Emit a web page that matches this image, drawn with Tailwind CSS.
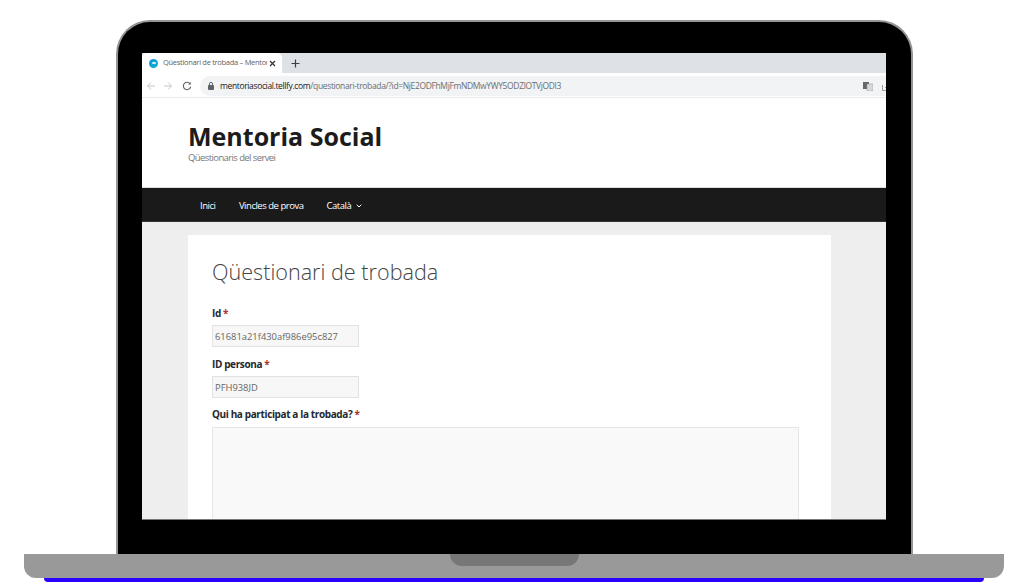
<!DOCTYPE html>
<html lang="ca">
<head>
    <meta charset="UTF-8">
    <title>Qüestionari de trobada</title>
    <script src="https://cdn.jsdelivr.net/npm/@tailwindcss/browser@4"></script>
</head>
<body class="bg-white w-[1024px] h-[588px] overflow-hidden pt-[20px] font-['Open_Sans',sans-serif]">

    <!-- laptop lid -->
    <div class="ml-[116px] w-[797px] h-[534px] bg-black border-2 border-b-0 border-[#949494] rounded-t-[34px] pt-[31px] pl-[24px]">
        <div class="w-[744px] h-[467px] bg-white overflow-hidden flex flex-col border-b border-[#777]">

            <!-- browser tabs -->
            <div class="h-[20px] shrink-0 bg-[#dee1e6] flex items-center">
                <div class="w-[140px] h-[20px] bg-white rounded-t-[5px] flex items-center pl-[7px] pr-[6px]">
                    <span class="w-[9px] h-[9px] rounded-full bg-gradient-to-br from-[#1595e8] to-[#10b5c0] flex items-center justify-center shrink-0">
                        <span class="w-[4px] h-[2px] bg-white/80 rounded-full"></span>
                    </span>
                    <span class="ml-[5px] w-[104px] text-[7.5px] tracking-[-0.3px] text-[#5f6368] whitespace-nowrap overflow-hidden">Qüestionari de trobada – Mentor</span>
                    <svg class="ml-auto shrink-0" width="7" height="7" viewBox="0 0 7 7"><path d="M1 1l5 5M6 1L1 6" stroke="#333" stroke-width="1.2"/></svg>
                </div>
                <svg class="ml-[9px]" width="9" height="9" viewBox="0 0 9 9"><path d="M4.5 .5v8M.5 4.5h8" stroke="#3c4043" stroke-width="1.2"/></svg>
            </div>

            <!-- browser toolbar -->
            <div class="h-[25px] shrink-0 bg-white border-b border-[#e8eaed] flex items-center pl-[4px] pt-[2px]">
                <svg width="10" height="10" viewBox="0 0 10 10" fill="none" stroke="#c4c7cb" stroke-width="1"><path d="M9 5H1.5M5 1.5L1.5 5 5 8.5"/></svg>
                <svg class="ml-[7px]" width="10" height="10" viewBox="0 0 10 10" fill="none" stroke="#c4c7cb" stroke-width="1"><path d="M1 5h7.5M5 1.5L8.5 5 5 8.5"/></svg>
                <svg class="ml-[9px]" width="10" height="10" viewBox="0 0 10 10" fill="none" stroke="#5f6368" stroke-width="1.1"><path d="M8.3 3.2A3.7 3.7 0 1 0 8.7 5.6"/><path d="M8.7 1v2.6H6.1" fill="#5f6368" stroke="none"/></svg>
                <div class="ml-[8px] w-[686px] h-[20px] bg-[#f1f3f4] rounded-l-full flex items-center pl-[8px] overflow-hidden">
                    <svg width="6" height="8" viewBox="0 0 6 8" class="shrink-0"><rect y="3" width="6" height="5" rx="1" fill="#5f6368"/><path d="M1.4 3.5V2a1.6 1.6 0 0 1 3.2 0v1.5" fill="none" stroke="#5f6368"/></svg>
                    <span class="ml-[6px] text-[8.5px] tracking-[-0.36px] whitespace-nowrap text-[#6b6f73]"><span class="text-[#202124]">mentoriasocial.tellfy.com</span>/questionari-trobada/?id=NjE2ODFhMjFmNDMwYWY5ODZlOTVjODI3</span>
                    <svg class="ml-auto shrink-0" width="10" height="9" viewBox="0 0 10 9"><rect width="6" height="7" fill="#666"/><rect x="4" y="2" width="6" height="7" fill="#d6d8da" stroke="#999" stroke-width=".5"/></svg>
                    <svg class="ml-[9px] mr-[-5px] shrink-0" width="9" height="9" viewBox="0 0 9 9" fill="none" stroke="#9a9da0"><path d="M.5 3v5.5h6M3 6l5-5"/></svg>
                </div>
            </div>

            <!-- site header -->
            <div class="h-[90px] shrink-0 pl-[46px] pt-[22px] border-b border-[#ddd]">
                <h1 class="text-[25px] leading-[32px] font-bold text-[#1c1c1c]">Mentoria Social</h1>
                <p class="text-[9.5px] tracking-[-0.6px] leading-[11px] text-[#777]">Qüestionaris del servei</p>
            </div>

            <!-- site nav -->
            <nav class="h-[34px] shrink-0 bg-[#1a1a1a] border-b border-[#333] flex items-center pl-[58px] pt-[3px] text-[9.5px] tracking-[-0.48px] text-white">
                <a href="#">Inici</a>
                <a href="#" class="ml-[23.5px]">Vincles de prova</a>
                <a href="#" class="ml-[23px] flex items-center">Català
                    <svg class="ml-[5px]" width="6" height="4" viewBox="0 0 6 4" fill="none" stroke="#fff"><path d="M.7.7L3 3 5.3.7"/></svg>
                </a>
            </nav>

            <!-- page -->
            <main class="grow bg-[#eeeeee] pt-[13px] pl-[46px]">
                <div class="w-[643px] h-[300px] bg-white pt-[22px] px-[24px]">
                    <h2 class="text-[21.6px] leading-[30px] font-light text-[#444]">Qüestionari de trobada</h2>
                    <label class="block mt-[19px] text-[10px] tracking-[-0.38px] leading-[14px] font-bold text-[#23282d]">Id <span class="text-[#a33]">*</span></label>
                    <input type="text" value="61681a21f430af986e95c827" readonly class="block mt-[5px] w-[147px] h-[22px] bg-[#f7f7f7] border border-[#e2e2e2] px-[2px] text-[9.4px] text-[#666]">
                    <label class="block mt-[10px] text-[10px] tracking-[-0.38px] leading-[14px] font-bold text-[#23282d]">ID persona <span class="text-[#a33]">*</span></label>
                    <input type="text" value="PFH938JD" readonly class="block mt-[5px] w-[147px] h-[22px] bg-[#f7f7f7] border border-[#e2e2e2] px-[2px] text-[9.4px] text-[#666]">
                    <label class="block mt-[9px] text-[10px] tracking-[-0.38px] leading-[14px] font-bold text-[#23282d]">Qui ha participat a la trobada? <span class="text-[#a33]">*</span></label>
                    <textarea readonly class="block mt-[6px] w-[587px] h-[140px] bg-[#f9f9f9] border border-[#e6e6e6]"></textarea>
                </div>
            </main>
        </div>
    </div>

    <!-- laptop base -->
    <div class="ml-[24px] w-[980px] h-[24px] bg-[#999999] rounded-b-[12px] flex justify-center">
        <div class="w-[129px] h-[12px] bg-[#777777] rounded-b-[12px]"></div>
    </div>
    <div class="ml-[44px] w-[940px] h-[4px] bg-[#2a00ff] rounded-b-[4px]"></div>

</body>
</html>
